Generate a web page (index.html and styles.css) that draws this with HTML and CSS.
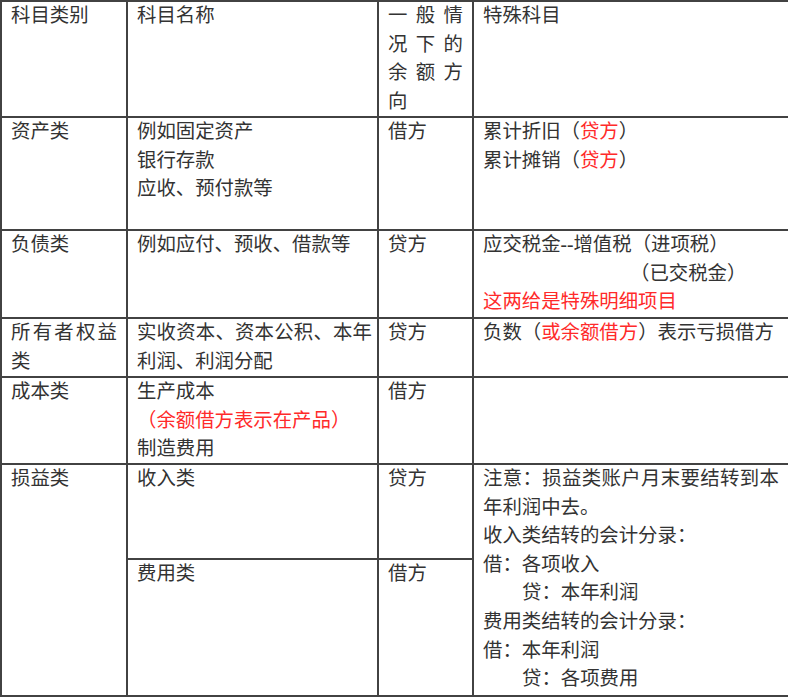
FILE: index.html
```html
<!DOCTYPE html>
<html lang="zh-CN">
<head>
<meta charset="utf-8">
<title>会计科目</title>
<link rel="stylesheet" href="styles.css">
</head>
<body>
<div class="sheet">
  <div class="cell">科目类别</div>
  <div class="cell">科目名称</div>
  <div class="cell">一般情况下的余额方向</div>
  <div class="cell">特殊科目</div>

  <div class="cell">资产类</div>
  <div class="cell"><p>例如固定资产</p><p>银行存款</p><p>应收、预付款等</p></div>
  <div class="cell">借方</div>
  <div class="cell"><p>累计折旧（<span class="red">贷方</span>）</p><p>累计摊销（<span class="red">贷方</span>）</p></div>

  <div class="cell">负债类</div>
  <div class="cell">例如应付、预收、借款等</div>
  <div class="cell">贷方</div>
  <div class="cell"><p>应交税金<span class="dash">--</span>增值税（进项税）</p><p class="tax">（已交税金）</p><p class="red">这两给是特殊明细项目</p></div>

  <div class="cell">所有者权益类</div>
  <div class="cell">实收资本、资本公积、本年利润、利润分配</div>
  <div class="cell">贷方</div>
  <div class="cell">负数（<span class="red">或余额借方</span>）表示亏损借方</div>

  <div class="cell">成本类</div>
  <div class="cell"><p>生产成本</p><p class="red">（余额借方表示在产品）</p><p>制造费用</p></div>
  <div class="cell">借方</div>
  <div class="cell"></div>

  <div class="cell span2">损益类</div>
  <div class="cell">收入类</div>
  <div class="cell">贷方</div>
  <div class="cell span2"><p>注意：损益类账户月末要结转到本年利润中去。</p><p>收入类结转的会计分录：</p><p>借：各项收入</p><p class="indent">贷：本年利润</p><p>费用类结转的会计分录：</p><p>借：本年利润</p><p class="indent">贷：各项费用</p></div>
  <div class="cell">费用类</div>
  <div class="cell">借方</div>
</div>
</body>
</html>
```

FILE: styles.css
```css
html, body {
  margin: 0;
  padding: 0;
  background: #ffffff;
  overflow: hidden;
}

.sheet {
  display: grid;
  grid-template-columns: 124px 249px 93px 314px;
  grid-template-rows: 114px 111px 86px 57px 85px 93px 135px;
  gap: 2px;
  padding: 2px;
  width: max-content;
  background: #424242;
  font-family: "Liberation Serif", "Noto Sans CJK SC", serif;
  font-size: 19.4px;
  line-height: 28.6px;
  color: #333333;
}

.cell {
  background: #ffffff;
  padding: 0 9px 0 9px;
  text-align: justify;
  overflow: hidden;
}

.cell:nth-child(4n+2) {
  padding-right: 5px;
}

.cell p {
  margin: 0;
}

.span2 {
  grid-row: span 2;
}

.red {
  color: #ff2a2a;
}

.dash {
  font-weight: bold;
}

.tax {
  padding-left: 147px;
}

.indent {
  padding-left: 39px;
}
```
